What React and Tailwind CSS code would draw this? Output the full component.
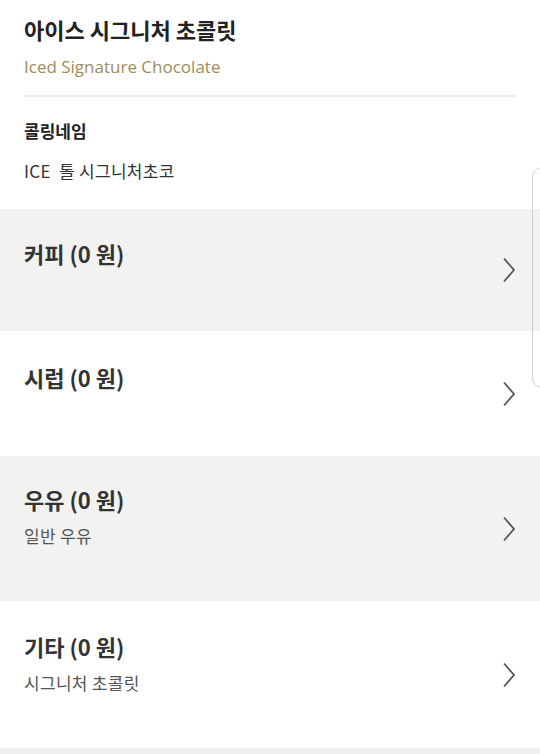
import React from "react";

const options = [
  { name: "커피", price: 0, sub: null, gray: true, h: "h-[122px]", pt: "pt-[29px]" },
  { name: "시럽", price: 0, sub: null, gray: false, h: "h-[125px]", pt: "pt-[31px]" },
  { name: "우유", price: 0, sub: "일반 우유", gray: true, h: "h-[145px]", pt: "pt-[28px]" },
  { name: "기타", price: 0, sub: "시그니처 초콜릿", gray: false, h: "h-[147px]", pt: "pt-[30px]" },
];

const Chevron = () => (
  <svg width="14" height="26" viewBox="0 0 14 26" fill="none" className="shrink-0">
    <path d="M2 1.5 L12 13 L2 24.5" stroke="#555555" strokeWidth="1.8" />
  </svg>
);

const OptionRow = ({ option }) => (
  <div
    className={`flex items-center justify-between pl-6 pr-[24px] ${option.h} ${
      option.gray ? "bg-[#f2f2f1]" : "bg-white"
    }`}
  >
    <div className={`self-start flex flex-col ${option.pt}`}>
      <div className="text-[22px] leading-[30px] font-bold text-[#333]">
        {option.name} (0 원)
      </div>
      {option.sub && (
        <div className="mt-[10px] text-[17px] leading-[24px] tracking-[0.3px] text-[#555]">{option.sub}</div>
      )}
    </div>
    <Chevron />
  </div>
);

export default function App() {
  return (
    <div
      className="relative w-[540px] h-[754px] overflow-hidden bg-white"
      style={{ fontFamily: '"Noto Sans CJK KR", "Noto Sans", sans-serif' }}
    >
      <div className="px-6 pt-[14px]">
        <div className="text-[22px] leading-[30px] font-bold text-[#222]">아이스 시그니처 초콜릿</div>
        <div className="mt-[11px] text-[17px] leading-[24px] text-[#a08c5c]" style={{ fontFamily: '"Open Sans", sans-serif' }}>
          Iced Signature Chocolate
        </div>
        <div className="mt-[16px] h-[2px] bg-[#ececec]" />
      </div>
      <div className="px-6 pt-[22px] h-[112px]">
        <div className="text-[17px] leading-[24px] font-bold text-[#222]">콜링네임</div>
        <div className="mt-[17px] text-[17px] leading-[22px] tracking-[0.3px] text-[#333]">ICE&nbsp;&nbsp;톨 시그니처초코</div>
      </div>
      {options.map((o) => (
        <OptionRow key={o.name} option={o} />
      ))}
      <div className="h-[6px] bg-[#f0f0ef]" />
      <div className="absolute left-[532px] top-[167px] w-[20px] h-[221px] rounded-l-[10px] border border-[#cfcfcf]" />
    </div>
  );
}
